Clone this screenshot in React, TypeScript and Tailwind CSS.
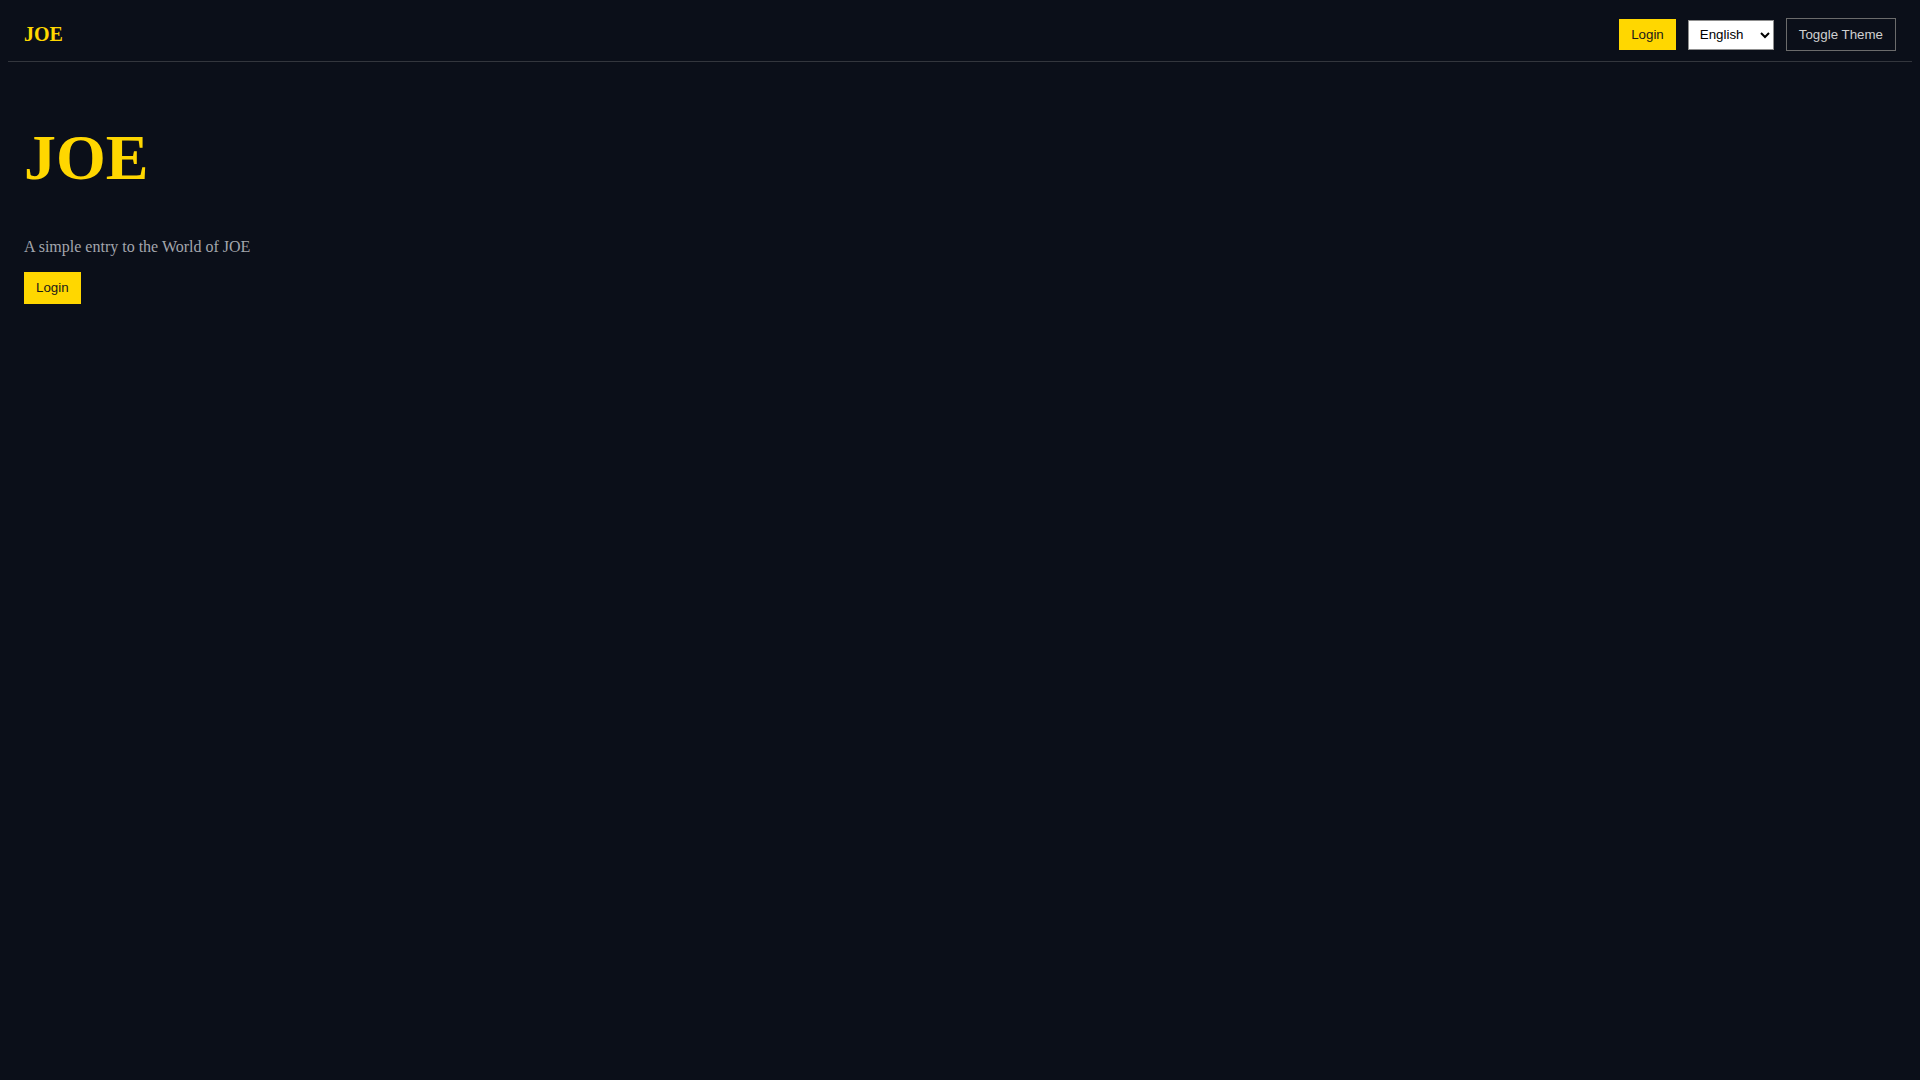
import { useState } from 'react';

const languages = [
  { label: 'English', value: 'en' },
  { label: 'Deutsch', value: 'de' },
];

const LoginButton = () => (
  <button className="bg-[#ffd700] text-[#1a1a1a] px-3 py-2 text-[13.33px] leading-[1.15] font-['Liberation_Sans',Arial,sans-serif] cursor-pointer">
    Login
  </button>
);

const App = () => {
  const [lang, setLang] = useState('en');

  return (
    <div className="min-h-screen bg-[#0b0f19] p-2 font-['Liberation_Serif','Times_New_Roman',serif]">
      <header className="flex justify-between items-center px-4 py-[10px] border-b border-[#33363d]">
        <span className="text-[20px] font-bold text-[#ffd700] leading-[1.15]">JOE</span>
        <div className="flex items-center gap-3">
          <LoginButton />
          <select
            value={lang}
            onChange={(e) => setLang(e.target.value)}
            className="h-[30px] w-[86px] bg-white text-black border border-[#8f8f8f] pl-[7px] text-[13.33px] font-['Liberation_Sans',Arial,sans-serif]"
          >
            {languages.map((l) => (
              <option key={l.value} value={l.value}>
                {l.label}
              </option>
            ))}
          </select>
          <button className="border border-[#6b6b6b] text-[#d0d0d0] px-3 py-2 text-[13.33px] leading-[1.15] font-['Liberation_Sans',Arial,sans-serif] cursor-pointer">
            Toggle Theme
          </button>
        </div>
      </header>

      <main className="px-4 pt-4">
        <h1 className="text-[64px] font-bold text-[#ffd700] leading-[normal] my-[43px]">JOE</h1>
        <p className="text-base text-[#a3a6ad] leading-[normal] mb-4">A simple entry to the World of JOE</p>
        <LoginButton />
      </main>
    </div>
  );
};

export default App;
